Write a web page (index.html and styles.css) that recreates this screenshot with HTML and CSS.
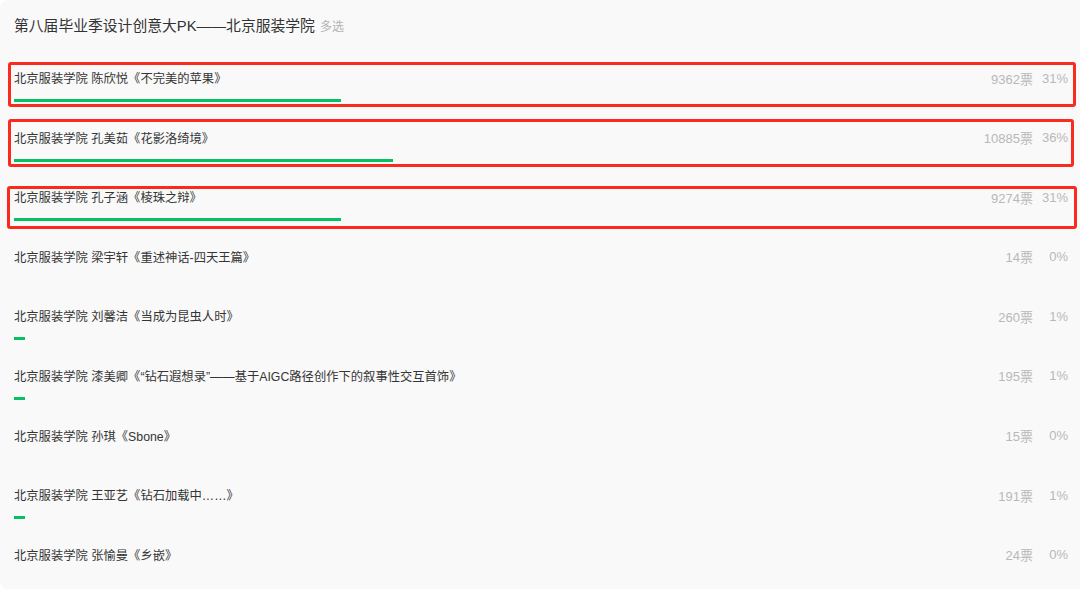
FILE: index.html
```html
<!DOCTYPE html>
<html lang="zh-CN">
<head>
    <meta charset="UTF-8">
    <meta name="viewport" content="width=device-width, initial-scale=1.0">
    <title>投票结果</title>
    <link rel="stylesheet" href="styles.css">
</head>
<body>
    <div class="card">
        <h2 class="vote-title">第八届毕业季设计创意大PK——北京服装学院<span class="vote-type">多选</span></h2>
        <ul class="options">
            <li class="option mark-1">
                <div class="option-head"><span class="option-name">北京服装学院 陈欣悦《不完美的苹果》</span><span class="option-count">9362票</span><span class="option-pct">31%</span></div>
                <div class="bar"><div class="bar-fill" style="width: 31%"></div></div>
            </li>
            <li class="option mark-2">
                <div class="option-head"><span class="option-name">北京服装学院 孔美茹《花影洛绮境》</span><span class="option-count">10885票</span><span class="option-pct">36%</span></div>
                <div class="bar"><div class="bar-fill" style="width: 36%"></div></div>
            </li>
            <li class="option mark-3">
                <div class="option-head"><span class="option-name">北京服装学院 孔子涵《棱珠之辩》</span><span class="option-count">9274票</span><span class="option-pct">31%</span></div>
                <div class="bar"><div class="bar-fill" style="width: 31%"></div></div>
            </li>
            <li class="option">
                <div class="option-head"><span class="option-name">北京服装学院 梁宇轩《重述神话-四天王篇》</span><span class="option-count">14票</span><span class="option-pct">0%</span></div>
                <div class="bar"><div class="bar-fill" style="width: 0%"></div></div>
            </li>
            <li class="option">
                <div class="option-head"><span class="option-name">北京服装学院 刘馨洁《当成为昆虫人时》</span><span class="option-count">260票</span><span class="option-pct">1%</span></div>
                <div class="bar"><div class="bar-fill" style="width: 1%"></div></div>
            </li>
            <li class="option">
                <div class="option-head"><span class="option-name">北京服装学院 漆美卿《“钻石遐想录”——基于AIGC路径创作下的叙事性交互首饰》</span><span class="option-count">195票</span><span class="option-pct">1%</span></div>
                <div class="bar"><div class="bar-fill" style="width: 1%"></div></div>
            </li>
            <li class="option">
                <div class="option-head"><span class="option-name">北京服装学院 孙琪《Sbone》</span><span class="option-count">15票</span><span class="option-pct">0%</span></div>
                <div class="bar"><div class="bar-fill" style="width: 0%"></div></div>
            </li>
            <li class="option">
                <div class="option-head"><span class="option-name">北京服装学院 王亚艺《钻石加载中……》</span><span class="option-count">191票</span><span class="option-pct">1%</span></div>
                <div class="bar"><div class="bar-fill" style="width: 1%"></div></div>
            </li>
            <li class="option">
                <div class="option-head"><span class="option-name">北京服装学院 张愉曼《乡嵌》</span><span class="option-count">24票</span><span class="option-pct">0%</span></div>
                <div class="bar"><div class="bar-fill" style="width: 0%"></div></div>
            </li>
        </ul>
    </div>
</body>
</html>
```

FILE: styles.css
```css
body {
    margin: 0;
    background-color: #ffffff;
    font-family: "Liberation Sans", "Noto Sans CJK SC", sans-serif;
    overflow: hidden;
}
.card {
    width: 1080px;
    height: 589px;
    box-sizing: border-box;
    background-color: #f9f9f9;
    border-radius: 8px 0 0 8px;
    padding-top: 16px;
}
.vote-title {
    margin: 0 0 24px;
    padding-left: 14px;
    font-size: 14.8px;
    line-height: 20px;
    font-weight: normal;
    color: #333333;
}
.vote-type {
    margin-left: 5px;
    font-size: 12px;
    color: #b2b2b2;
}
.options {
    list-style: none;
    margin: 0;
    padding: 0;
}
.option {
    position: relative;
    height: 59.6px;
    box-sizing: border-box;
    padding: 7px 12px 0 14px;
}
.option-head {
    display: flex;
    align-items: center;
    height: 20px;
}
.option-name {
    flex: 1;
    font-size: 12.3px;
    color: #353535;
    white-space: nowrap;
}
.option-count,
.option-pct {
    font-size: 13px;
    color: #b8b8b8;
    text-align: right;
}
.option-pct {
    width: 35px;
}
.bar {
    margin-top: 11px;
    height: 3px;
}
.bar-fill {
    height: 100%;
    background-color: #07c160;
}

/* red annotation boxes */
.mark-1::after,
.mark-2::after,
.mark-3::after {
    content: "";
    position: absolute;
    border: 3px solid #fa2a1e;
    border-radius: 3px;
}
.mark-1::after {
    top: 1px;
    bottom: 13.6px;
    left: 8px;
    right: 4px;
}
.mark-2::after {
    top: -1.6px;
    bottom: 13.2px;
    left: 8px;
    right: 6px;
}
.mark-3::after {
    top: 5.8px;
    bottom: 10.8px;
    left: 7px;
    right: 3px;
}
```
